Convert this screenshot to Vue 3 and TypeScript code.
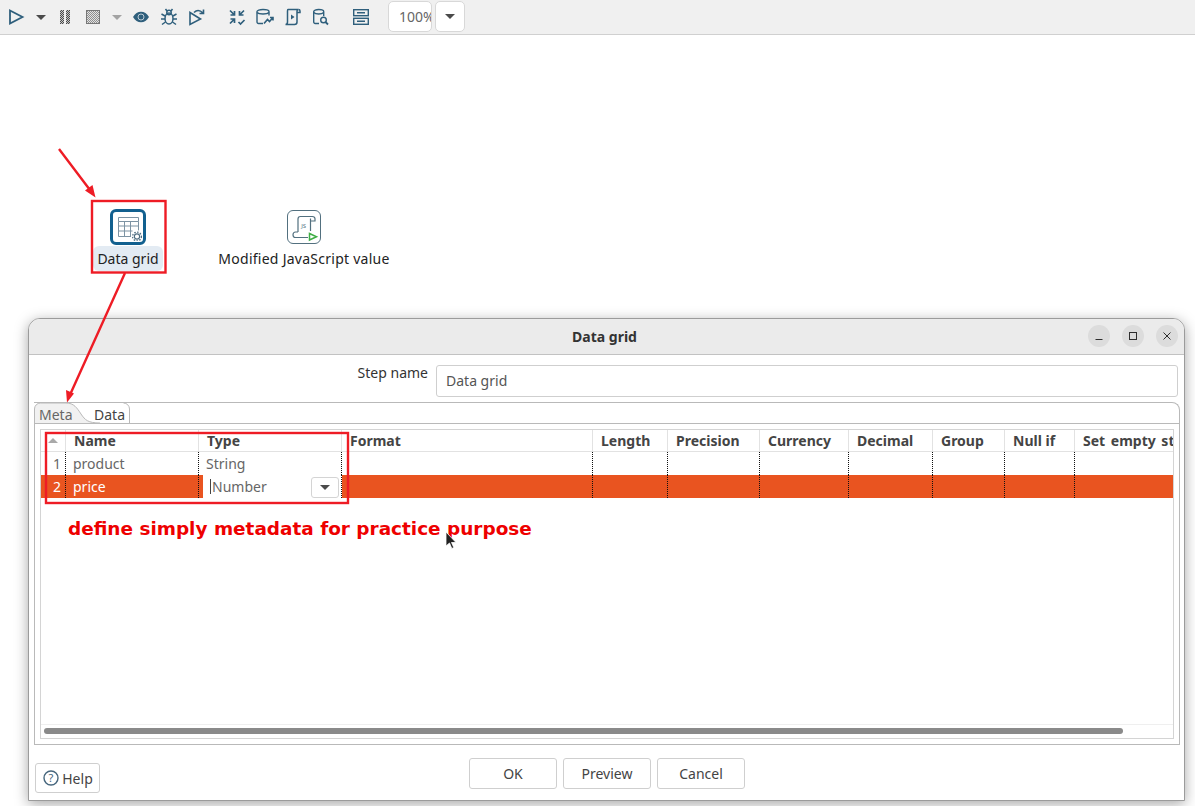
<script setup lang="ts">
interface Column {
  name: string;
  width: number;
}

const columns: Column[] = [
  { name: 'Name', width: 133 },
  { name: 'Type', width: 143 },
  { name: 'Format', width: 251 },
  { name: 'Length', width: 75 },
  { name: 'Precision', width: 92 },
  { name: 'Currency', width: 89 },
  { name: 'Decimal', width: 84 },
  { name: 'Group', width: 72 },
  { name: 'Null if', width: 70 },
  { name: 'Set empty string?', width: 98 },
];

const gridColumns = '25px ' + columns.map((c) => c.width + 'px').join(' ');
const restColumns = columns.slice(2);
</script>

<template>
  <div class="page">
    <header class="toolbar">
      <button class="tool play" type="button" aria-label="Run">
        <svg width="18" height="18" viewBox="0 0 18 18"><path d="M3 2.500 15.500 9 3 15.500Z" fill="none" stroke="#2f5f7c" stroke-width="1.800" /></svg>
      </button>
      <span class="caret dark"></span>
      <button class="tool pause" type="button" aria-label="Pause">
        <svg width="14" height="16" viewBox="0 0 14 16" shape-rendering="crispEdges">
          <defs><pattern id="dither-dark" width="2" height="2" patternUnits="userSpaceOnUse"><rect width="2" height="2" fill="#c4c4c4" /><path d="M0 0h1v1H0zM1 1h1v1H1z" fill="#4c4c4c" /></pattern></defs>
          <path d="M2 1h4v14H2zM8 1h4v14H8z" fill="url(#dither-dark)" />
        </svg>
      </button>
      <button class="tool stop" type="button" aria-label="Stop">
        <svg width="16" height="16" viewBox="0 0 16 16" shape-rendering="crispEdges">
          <defs><pattern id="dither-light" width="2" height="2" patternUnits="userSpaceOnUse"><rect width="2" height="2" fill="#e2e2e2" /><path d="M0 0h1v1H0zM1 1h1v1H1z" fill="#8f8f8f" /></pattern></defs>
          <rect x="1.500" y="1.500" width="13" height="13" fill="url(#dither-light)" stroke="#777" />
        </svg>
      </button>
      <span class="caret light"></span>
      <button class="tool eye" type="button" aria-label="Preview">
        <svg width="18" height="14" viewBox="0 0 18 14"><path d="M1 7c2-3.600 4.800-5.300 8-5.300S15 3.400 17 7c-2 3.600-4.800 5.300-8 5.300S3 10.600 1 7Z" fill="#2f5f7c" /><circle cx="9" cy="7" r="3" fill="#2f5f7c" stroke="#dfe7ec" stroke-width=".8" /></svg>
      </button>
      <button class="tool bug" type="button" aria-label="Debug">
        <svg width="18" height="18" viewBox="0 0 18 18" fill="none" stroke="#2f5f7c" stroke-width="1.500"><ellipse cx="9" cy="10.500" rx="4" ry="5.500" /><circle cx="9" cy="4.500" r="2.200" /><path d="M1.500 6 5 8M16.500 6 13 8M1 11h4M17 11h-4M2 16.500 5.500 14M16 16.500 12.500 14M5.500 1 7 3M12.500 1 11 3" /></svg>
      </button>
      <button class="tool step" type="button" aria-label="Replay">
        <svg width="18" height="18" viewBox="0 0 18 18" fill="none" stroke="#2f5f7c" stroke-width="1.600"><path d="M2 4.500v12L12.500 11Z" /><path d="M6 4.500c2.500-2.500 6-2.500 9 .5M15.500 1.500V5.500H11.500" /></svg>
      </button>
      <button class="tool check" type="button" aria-label="Verify">
        <svg width="18" height="18" viewBox="0 0 18 18" fill="none" stroke="#2f5f7c" stroke-width="1.700"><path d="M2 2.500 6.500 7M6.500 3V7H2.500M16 2.500 11.500 7M11.500 3V7H15.500M2 15.500 6.500 11M2.500 11H6.500V15M10.500 14 12.500 16 16.500 12" /></svg>
      </button>
      <button class="tool impact" type="button" aria-label="Impact">
        <svg width="20" height="18" viewBox="0 0 20 18" fill="none" stroke="#2f5f7c" stroke-width="1.400"><path d="M8 15.500H3.500a1.500 1.500 0 0 1-1.500-1.500V3.500c0-1.200 2.500-2 6-2s6 .8 6 2v4" /><path d="M2 4.500c1 1 3 1.500 6 1.500s5-.5 6-1.500" /><path d="M9 15.500 12.500 11.500 14.500 13.500 18 9.500M15 9.500h3v3" stroke-width="1.600" /></svg>
      </button>
      <button class="tool sql" type="button" aria-label="SQL">
        <svg width="18" height="18" viewBox="0 0 18 18" fill="none" stroke="#2f5f7c" stroke-width="1.500"><path d="M5 1.500h10.500c-1 0-1.500 1-1.500 2V14c0 1.500-1 2.500-2.500 2.500H2.500C4 16.500 4.500 15.500 4.500 14V3c0-.8.200-1.500.500-1.500Z" /><path d="M15.500 1.500c1 0 1.500.8 1.500 1.500v1.500h-3" /><path d="M8 6.500v5l3.500-2.500Z" fill="#2f5f7c" stroke="none" /></svg>
      </button>
      <button class="tool explore" type="button" aria-label="Explore">
        <svg width="18" height="18" viewBox="0 0 18 18" fill="none" stroke="#2f5f7c" stroke-width="1.400"><path d="M7 15.500H3.200A1.500 1.500 0 0 1 1.700 14V3.500c0-1.200 2.200-2 5-2s5 .8 5 2V8" /><path d="M1.700 4.500c1 1 2.800 1.500 5 1.500s4-.5 5-1.500" /><circle cx="11.500" cy="12" r="2.800" /><path d="M13.500 14 16 16.500" stroke-width="1.800" /></svg>
      </button>
      <button class="tool layout" type="button" aria-label="Layout">
        <svg width="18" height="18" viewBox="0 0 18 18" fill="none" stroke="#2f5f7c" stroke-width="1.400"><rect x="1.700" y="1.700" width="14.600" height="6" /><rect x="1.700" y="10.300" width="14.600" height="6" /><path d="M5 4.700h8M5 13.300h8" /></svg>
      </button>
      <div class="zoom-box">100%</div>
      <button class="zoom-drop" type="button" aria-label="Zoom options"><span class="caret dark"></span></button>
    </header>

    <main class="canvas">
      <div class="node node-grid">
        <div class="step-icon selected">
          <svg width="28" height="28" viewBox="0 0 28 28" fill="none" stroke="#7d93a3" stroke-width="1">
            <path d="M4.500 4.500h20v4h-20zM4.500 8.500v15h14M24.500 8.500v9M4.500 13h20M4.500 18h14M10.500 8.500v15M16.500 8.500v15" />
            <circle cx="23" cy="23.500" r="6" fill="#fff" stroke="none" />
            <circle cx="23" cy="23.500" r="2.600" stroke="#4f6d80" stroke-width="1.100" />
            <circle cx="23" cy="23.500" r="4.400" stroke="#4f6d80" stroke-width="1.300" stroke-dasharray="1.500 1.400" />
          </svg>
        </div>
        <span class="node-label active">Data grid</span>
      </div>

      <div class="node node-js">
        <div class="step-icon">
          <svg width="30" height="30" viewBox="0 0 30 30" fill="none" stroke="#52707f" stroke-width="1.200">
            <path d="M9 20V7c0-1.500.8-2.500 2.300-2.500h12c1.600 0 2.700 1 2.700 2.300V9h-4.500M21.500 6.500V19" />
            <path d="M9 20H6.500C5 20 4 21.200 4 22.700S5 25.500 6.500 25.500H19" />
            <text x="12.200" y="16" class="js-text">JS</text>
            <path d="M20.500 21.500v6.500l7-3.200Z" fill="#fff" stroke="#3fae45" stroke-width="1.500" />
          </svg>
        </div>
        <span class="node-label wide">Modified JavaScript value</span>
      </div>

      <section class="dialog">
        <div class="titlebar">
          <span class="title">Data grid</span>
          <div class="win-buttons">
            <button class="win" type="button" aria-label="Minimize"><svg width="10" height="10" viewBox="0 0 10 10"><path d="M1.500 8.500h7" stroke="#2e2e2e" stroke-width="1" /></svg></button>
            <button class="win" type="button" aria-label="Maximize"><svg width="10" height="10" viewBox="0 0 10 10"><rect x="1.500" y="1.500" width="7" height="7" fill="none" stroke="#2e2e2e" /></svg></button>
            <button class="win" type="button" aria-label="Close"><svg width="10" height="10" viewBox="0 0 10 10"><path d="M1.500 1.500l7 7M8.500 1.500l-7 7" stroke="#2e2e2e" stroke-width="1" /></svg></button>
          </div>
        </div>

        <div class="dialog-body">
          <div class="step-row">
            <label class="step-label">Step name</label>
            <div class="step-input">Data grid</div>
          </div>

          <div class="tabs">
            <svg class="tab-shape" width="96" height="22" viewBox="0 0 96 22" fill="none">
              <path d="M.500 21V7a6 6 0 0 1 6-6H32c8 0 11 5 15 11s7 9 19 9Z" fill="#f1f1f1" />
              <path d="M.500 21V7a6 6 0 0 1 6-6H32c8 0 11 5 15 11s7 9 19 9" stroke="#b9b9b9" />
              <path d="M95.500 21V7a6 6 0 0 0-6-6" stroke="#b9b9b9" />
            </svg>
            <span class="tab meta">Meta</span>
            <span class="tab data">Data</span>
          </div>

          <div class="tab-panel">
            <div class="grid">
              <div class="grid-row head" :style="{ gridTemplateColumns: gridColumns }">
                <div class="cell num"><span class="sort"></span></div>
                <div v-for="col in columns" :key="col.name" class="cell">{{ col.name }}</div>
              </div>
              <div class="grid-row body" :style="{ gridTemplateColumns: gridColumns }">
                <div class="cell num">1</div>
                <div class="cell">product</div>
                <div class="cell">String</div>
                <div v-for="col in restColumns" :key="col.name" class="cell"></div>
              </div>
              <div class="grid-row body selected-row" :style="{ gridTemplateColumns: gridColumns }">
                <div class="cell num">2</div>
                <div class="cell">price</div>
                <div class="cell editor">
                  <span class="caret-line"></span>Number
                  <span class="combo"><span class="caret dark"></span></span>
                </div>
                <div v-for="col in restColumns" :key="col.name" class="cell"></div>
              </div>
              <div class="grid-fill"></div>
              <div class="scroll-track"><div class="scroll-thumb"></div></div>
            </div>
          </div>

          <div class="footer">
            <button class="btn help" type="button">
              <svg width="18" height="18" viewBox="0 0 18 18" fill="none"><circle cx="9" cy="9" r="7" stroke="#46667d" stroke-width="1.400" /><text x="9" y="12.800" class="help-mark">?</text></svg>
              Help
            </button>
            <div class="actions">
              <button class="btn" type="button">OK</button>
              <button class="btn" type="button">Preview</button>
              <button class="btn" type="button">Cancel</button>
            </div>
          </div>
        </div>
      </section>

      <p class="note">define simply metadata for practice purpose</p>
      <svg class="cursor" width="12" height="20" viewBox="0 0 12 20"><path d="M1 1v14l3.500-3 2.300 5.500 2-1-2.300-5H11Z" fill="#222" stroke="#fff" stroke-width=".8" /></svg>

      <svg class="marks" width="1195" height="806" viewBox="0 0 1195 806" fill="none">
        <rect x="92" y="201" width="73.500" height="71.500" stroke="#ee1c25" stroke-width="2.400" />
        <rect x="46" y="433" width="302" height="70" stroke="#ee1c25" stroke-width="2.400" />
        <path d="M59 149 91.500 192M125 273 69 397" stroke="#ee1c25" stroke-width="2.400" />
        <path d="M95.500 197.500 85 190.500 92.500 185ZM67 402.500 66 390 74 393.500Z" fill="#ee1c25" />
      </svg>
    </main>
  </div>
</template>

<style>
html,
body {
  margin: 0;
  background: #fff;
}
</style>

<style scoped>
.page {
  width: 1195px;
  height: 806px;
  overflow: hidden;
  position: relative;
  font-family: "Noto Sans", "Open Sans", sans-serif;
  background: #fff;
}
button {
  font: inherit;
  padding: 0;
  border: 0;
  background: none;
}
.toolbar {
  height: 35px;
  box-sizing: border-box;
  display: flex;
  align-items: center;
  background: #f0f0f0;
  border-bottom: 1px solid #d0d0d0;
}
.tool {
  display: flex;
  align-items: center;
  justify-content: center;
  width: 20px;
  height: 20px;
  flex: none;
}
.play { margin-left: 6px; }
.pause { margin-left: 9px; }
.stop { margin-left: 8px; }
.eye { margin-left: 9px; }
.bug { margin-left: 8px; }
.step { margin-left: 8px; }
.check { margin-left: 20px; }
.impact { margin-left: 8px; }
.sql { margin-left: 7px; }
.explore { margin-left: 9px; }
.layout { margin-left: 20px; }
.caret {
  display: inline-block;
  width: 0;
  height: 0;
  border-left: 5px solid transparent;
  border-right: 5px solid transparent;
  border-top: 5px solid #4a4a4a;
  flex: none;
}
.toolbar > .caret { margin-left: 10px; margin-top: 1px; }
.toolbar > .caret.light { border-top-color: #a3a3a3; margin-left: 9px; }
.zoom-box {
  margin-left: 17px;
  width: 44px;
  height: 31px;
  box-sizing: border-box;
  overflow: hidden;
  white-space: nowrap;
  background: #fff;
  border: 1px solid #d8d8d8;
  border-radius: 5px;
  font-size: 14px;
  line-height: 29px;
  padding-left: 10px;
  color: #666;
  margin-top: -2px;
}
.zoom-drop {
  margin-left: 3px;
  width: 30px;
  height: 31px;
  box-sizing: border-box;
  background: #fff;
  border: 1px solid #d8d8d8;
  border-radius: 5px;
  display: flex;
  align-items: center;
  justify-content: center;
  margin-top: -2px;
}
.canvas {
  height: 771px;
  background: #fff;
}
.node {
  position: absolute;
  display: flex;
  flex-direction: column;
  align-items: center;
}
.node-grid { left: 93px; top: 209px; width: 70px; }
.node-js { left: 204px; top: 210px; width: 200px; }
.step-icon {
  box-sizing: border-box;
  width: 34px;
  height: 34px;
  border: 1px solid #52707f;
  border-radius: 6px;
  display: flex;
  align-items: center;
  justify-content: center;
  background: #fff;
}
.step-icon.selected {
  border: 3px solid #12608f;
  width: 36px;
  height: 36px;
}
.js-text {
  font-size: 6px;
  fill: #52707f;
  stroke: none;
}
.node-label {
  margin-top: 2px;
  font-size: 14px;
  line-height: 25px;
  color: #222;
  white-space: nowrap;
}
.node-label.wide { letter-spacing: 0.26px; }
.node-label.active {
  margin-top: 1px;
  background: #e3ebf3;
  border-radius: 6px;
  padding: 0 4px;
}
.dialog {
  position: absolute;
  left: 28px;
  top: 318px;
  width: 1157px;
  height: 483px;
  box-sizing: border-box;
  border: 1px solid #9b9b9b;
  border-radius: 12px 12px 0 0;
  background: #fff;
  box-shadow: 0 3px 14px rgba(0, 0, 0, 0.35);
  display: flex;
  flex-direction: column;
}
.titlebar {
  height: 35px;
  flex: none;
  background: #ebebeb;
  border-bottom: 1px solid #c2c2c2;
  border-radius: 11px 11px 0 0;
  display: flex;
  align-items: center;
  justify-content: center;
  position: relative;
}
.title {
  font-size: 14px;
  font-weight: 700;
  color: #333;
  margin-right: 4px;
}
.win-buttons {
  position: absolute;
  right: 6px;
  top: 6px;
  display: flex;
  gap: 12px;
}
.win {
  width: 22px;
  height: 22px;
  border-radius: 50%;
  background: #dcdcdc;
  display: flex;
  align-items: center;
  justify-content: center;
}
.dialog-body {
  flex: 1;
  min-height: 0;
  display: flex;
  flex-direction: column;
  padding: 10px 4px 10px 5px;
}
.step-row {
  display: flex;
  align-items: flex-start;
  justify-content: flex-end;
  gap: 8px;
  height: 32px;
  padding-right: 2px;
  flex: none;
}
.step-label {
  font-size: 14px;
  line-height: 16px;
  color: #333;
}
.step-input {
  box-sizing: border-box;
  width: 742px;
  height: 32px;
  border: 1px solid #cfcfcf;
  border-radius: 3px;
  font-size: 14px;
  line-height: 30px;
  padding-left: 9px;
  color: #555;
}
.tabs {
  position: relative;
  height: 21px;
  margin-top: 5px;
  flex: none;
  border-top: 1px solid #b9b9b9;
  border-right: 1px solid #b9b9b9;
  border-radius: 0 8px 0 0;
  box-sizing: border-box;
}
.tab-shape {
  position: absolute;
  left: 0;
  top: -1px;
}
.tab {
  position: absolute;
  top: 2px;
  font-size: 14px;
  line-height: 19px;
}
.tab.meta { left: 5px; color: #666; }
.tab.data { left: 60px; color: #444; }
.tab-panel {
  flex: 1;
  min-height: 0;
  margin-bottom: 13px;
  border: 1px solid #b9b9b9;
  padding: 5px;
  display: flex;
}
.grid {
  flex: 1;
  min-width: 0;
  border: 1px solid #d4d4d4;
  overflow: hidden;
  display: flex;
  flex-direction: column;
}
.grid-row {
  display: grid;
  flex: none;
  font-size: 14px;
  color: #666;
}
.head {
  height: 21px;
  border-bottom: 1px solid #e2e2e2;
  font-weight: 700;
  color: #444;
}
.head .cell {
  border-right: 1px solid #e2e2e2;
  padding-left: 8px;
  line-height: 21px;
}
.head .cell:last-child {
  word-spacing: 2px;
  border-right: 0;
}
.body {
  height: 23px;
}
.cell {
  box-sizing: border-box;
  overflow: hidden;
  white-space: nowrap;
  line-height: 23px;
  padding-left: 7px;
}
.body .cell {
  border-right: 1px dotted #111;
}
.body .cell:last-child {
  border-right: 0;
}
.num {
  padding-left: 0;
  padding-right: 4px;
  text-align: right;
}
.head .num {
  padding: 0;
  display: flex;
  align-items: center;
  justify-content: center;
}
.sort {
  width: 0;
  height: 0;
  border-left: 5px solid transparent;
  border-right: 5px solid transparent;
  border-bottom: 5px solid #a9a9a9;
}
.selected-row {
  background: #e95420;
  color: #fff;
}
.editor {
  position: relative;
  background: #fff;
  color: #666;
  margin-left: 4px;
  padding-left: 9px;
}
.caret-line {
  position: absolute;
  left: 7px;
  top: 4px;
  width: 1px;
  height: 15px;
  background: #444;
}
.combo {
  position: absolute;
  right: 2px;
  top: 2px;
  width: 28px;
  height: 21px;
  box-sizing: border-box;
  background: #fff;
  border: 1px solid #d4d4d4;
  border-radius: 3px;
  display: flex;
  align-items: center;
  justify-content: center;
}
.grid-fill { flex: 1; }
.scroll-track {
  flex: none;
  height: 14px;
  border-top: 1px solid #efefef;
  padding: 3px;
  box-sizing: border-box;
}
.scroll-thumb {
  width: 1079px;
  height: 6px;
  background: #8a8a8a;
  border-radius: 3px;
}
.footer {
  display: flex;
  align-items: flex-start;
  flex: none;
  position: relative;
  height: 32px;
  justify-content: center;
}
.actions {
  display: flex;
  gap: 6px;
}
.btn {
  box-sizing: border-box;
  width: 88px;
  height: 31px;
  background: #fff;
  border: 1px solid #cfcfcf;
  border-radius: 3px;
  font-size: 14px;
  color: #444;
}
.help {
  position: absolute;
  left: 1px;
  top: 5px;
  width: 65px;
  height: 30px;
  display: flex;
  align-items: center;
  justify-content: center;
  gap: 2px;
}
.help-mark {
  font-size: 11px;
  fill: #46667d;
  text-anchor: middle;
}
.note {
  position: absolute;
  left: 68px;
  top: 517px;
  margin: 0;
  font-family: "DejaVu Sans", sans-serif;
  font-weight: 700;
  font-size: 18.44px;
  line-height: 24px;
  color: #ee0000;
  white-space: nowrap;
}
.cursor {
  position: absolute;
  left: 445px;
  top: 531px;
}
.marks {
  position: absolute;
  left: 0;
  top: 0;
  pointer-events: none;
}
</style>
